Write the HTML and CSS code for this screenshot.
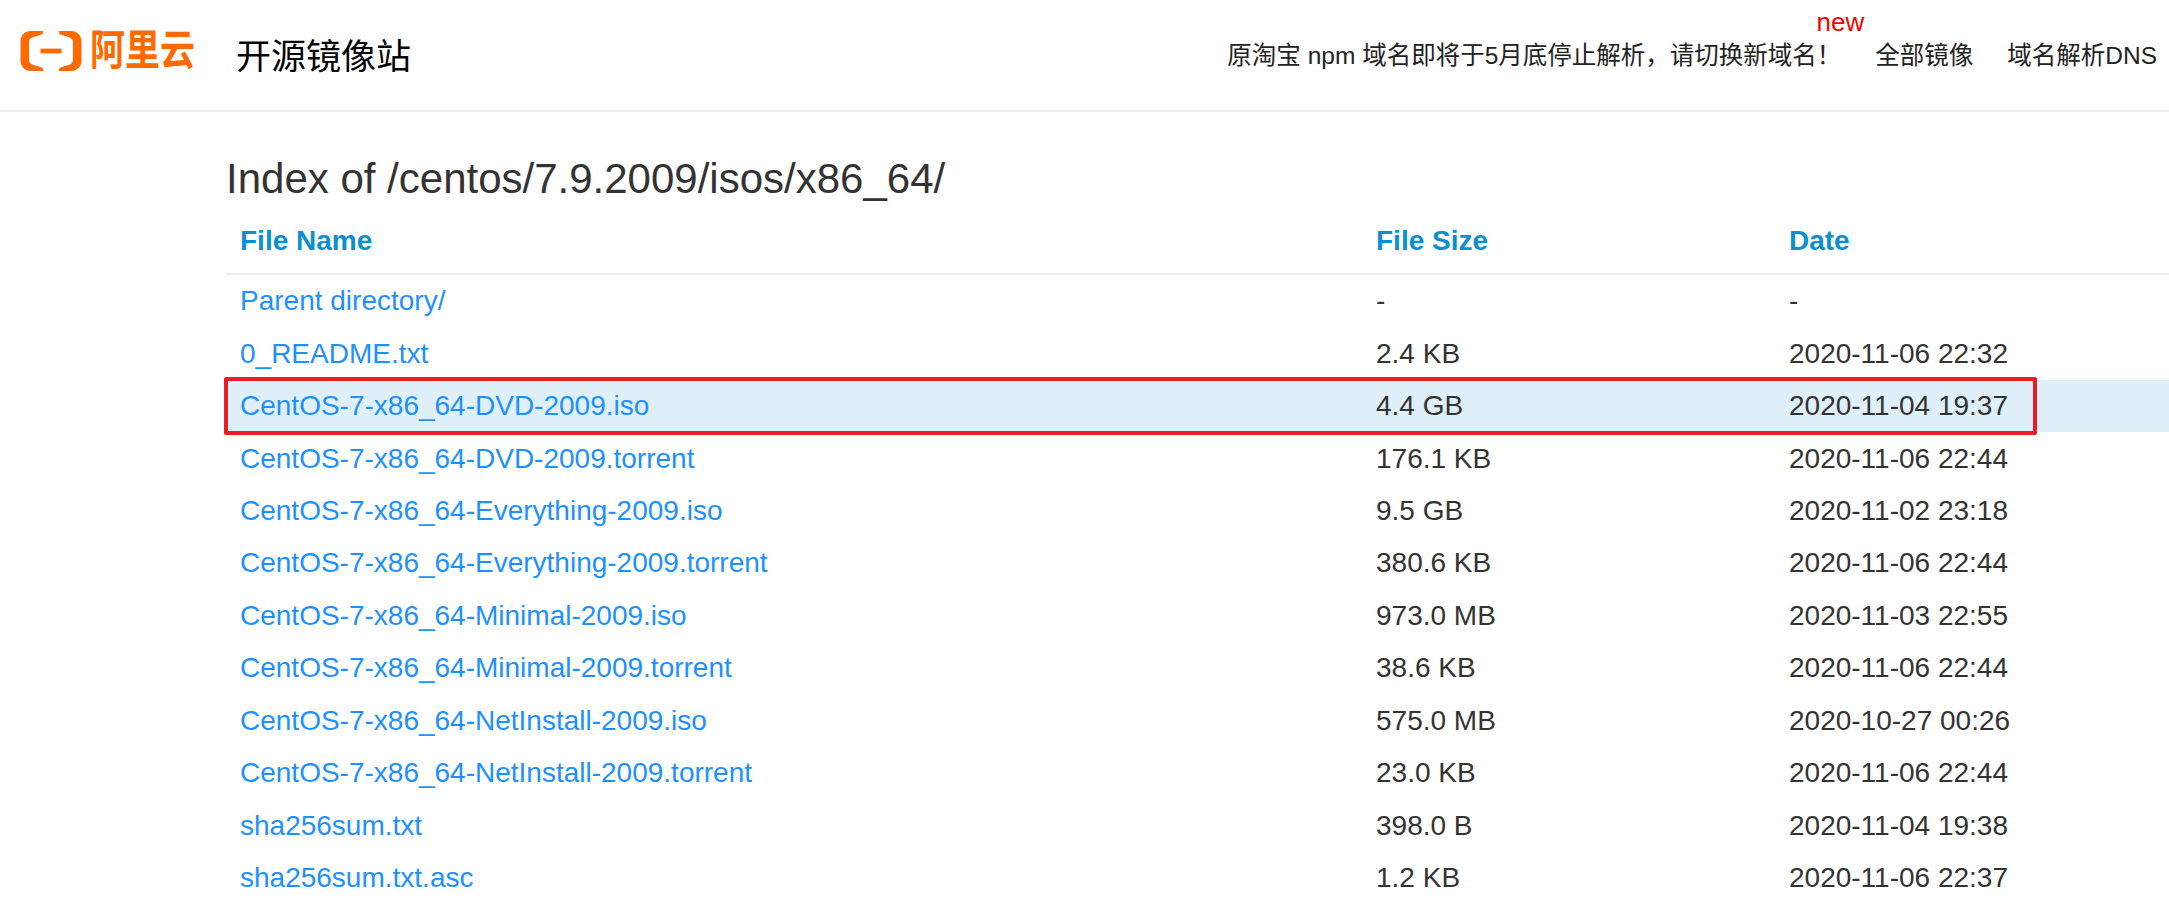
FILE: index.html
```html
<!DOCTYPE html>
<html lang="zh-CN">
<head>
    <meta charset="UTF-8">
    <meta name="viewport" content="width=device-width, initial-scale=1.0">
    <title>Index of /centos/7.9.2009/isos/x86_64/</title>
    <link rel="stylesheet" href="styles.css">
</head>
<body>
    <header class="header">
        <div class="brand">
            <svg class="logo-mark" viewBox="0 0 64 42" width="62" height="40">
                <path fill="#ff6a00" d="M24 0H11C4.500 0 0 4.500 0 11V31C0 37.500 4.500 42 11 42H24L23 38.500L13 35.500C10.500 34.800 9 33 9 30.500V11.500C9 9 10.500 7.200 13 6.500L23 3.500Z"/>
                <path fill="#ff6a00" d="M40 0H53C59.500 0 64 4.500 64 11V31C64 37.500 59.500 42 53 42H40L41 38.500L51 35.500C53.500 34.800 55 33 55 30.500V11.500C55 9 53.500 7.200 51 6.500L41 3.500Z"/>
                <rect fill="#ff6a00" x="21" y="18.500" width="22" height="5"/>
            </svg>
            <span class="logo-text">阿里云</span>
            <span class="site-name">开源镜像站</span>
        </div>
        <nav class="nav">
            <a class="nav-notice" href="#">原淘宝 npm 域名即将于5月底停止解析，请切换新域名！<sup class="new-tag">new</sup></a>
            <a href="#">全部镜像</a>
            <a href="#">域名解析DNS</a>
        </nav>
    </header>

    <main class="content">
        <h3 class="title">Index of /centos/7.9.2009/isos/x86_64/</h3>
        <table class="files">
            <thead>
                <tr>
                    <th class="col-name">File Name</th>
                    <th class="col-size">File Size</th>
                    <th>Date</th>
                </tr>
            </thead>
            <tbody>
                <tr><td><a href="#">Parent directory/</a></td><td>-</td><td>-</td></tr>
                <tr><td><a href="#">0_README.txt</a></td><td>2.4 KB</td><td>2020-11-06 22:32</td></tr>
                <tr class="active"><td><a href="#">CentOS-7-x86_64-DVD-2009.iso</a><div class="red-box"></div></td><td>4.4 GB</td><td>2020-11-04 19:37</td></tr>
                <tr><td><a href="#">CentOS-7-x86_64-DVD-2009.torrent</a></td><td>176.1 KB</td><td>2020-11-06 22:44</td></tr>
                <tr><td><a href="#">CentOS-7-x86_64-Everything-2009.iso</a></td><td>9.5 GB</td><td>2020-11-02 23:18</td></tr>
                <tr><td><a href="#">CentOS-7-x86_64-Everything-2009.torrent</a></td><td>380.6 KB</td><td>2020-11-06 22:44</td></tr>
                <tr><td><a href="#">CentOS-7-x86_64-Minimal-2009.iso</a></td><td>973.0 MB</td><td>2020-11-03 22:55</td></tr>
                <tr><td><a href="#">CentOS-7-x86_64-Minimal-2009.torrent</a></td><td>38.6 KB</td><td>2020-11-06 22:44</td></tr>
                <tr><td><a href="#">CentOS-7-x86_64-NetInstall-2009.iso</a></td><td>575.0 MB</td><td>2020-10-27 00:26</td></tr>
                <tr><td><a href="#">CentOS-7-x86_64-NetInstall-2009.torrent</a></td><td>23.0 KB</td><td>2020-11-06 22:44</td></tr>
                <tr><td><a href="#">sha256sum.txt</a></td><td>398.0 B</td><td>2020-11-04 19:38</td></tr>
                <tr><td><a href="#">sha256sum.txt.asc</a></td><td>1.2 KB</td><td>2020-11-06 22:37</td></tr>
            </tbody>
        </table>
    </main>
</body>
</html>
```

FILE: styles.css
```css
html, body {
    height: 100%;
}
body {
    margin: 0;
    overflow: hidden;
    font-family: "Liberation Sans", "Noto Sans CJK SC", sans-serif;
    font-size: 28px;
    color: #333;
    background: #fff;
}
.header {
    display: flex;
    justify-content: space-between;
    align-items: center;
    height: 110px;
    padding: 0 12px 0 20px;
    border-bottom: 2px solid #eee;
}
.brand {
    display: flex;
    align-items: center;
}
.logo-mark {
    margin-top: -8px;
}
.logo-text {
    margin-left: 8px;
    margin-top: -8px;
    width: 107px;
    font-size: 35px;
    font-weight: bold;
    line-height: 44px;
    white-space: nowrap;
    color: #ff6a00;
    transform: scaleY(1.2);
}
.site-name {
    margin-left: 39px;
    margin-top: -4px;
    font-size: 35px;
    color: #000;
}
.nav {
    display: flex;
    align-items: center;
    gap: 34px;
    margin-top: -3px;
}
.nav a {
    color: #222;
    text-decoration: none;
    font-size: 24.500px;
}
.nav-notice {
    position: relative;
}
.new-tag {
    position: absolute;
    right: -23px;
    top: -28px;
    font-size: 26px;
    line-height: 28px;
    color: #f00;
}
.content {
    padding: 0 0 0 226px;
}
.title {
    margin: 37px 0 0;
    font-size: 42px;
    font-weight: normal;
    line-height: 60px;
}
.files {
    width: 100%;
    border-collapse: collapse;
    table-layout: fixed;
}
.col-name {
    width: 1108px;
}
.col-size {
    width: 385px;
}
.files th {
    padding: 0 14px;
    height: 64px;
    text-align: left;
    font-size: 28px;
    color: #0a8fd1;
    border-bottom: 2px solid #eee;
}
.files td {
    padding: 0 14px;
    height: 52.450px;
    line-height: 36px;
}
.files a {
    color: #1e90ff;
    text-decoration: none;
}
.active td {
    background: #dff0fa;
}
.active td:first-child {
    position: relative;
}
.red-box {
    position: absolute;
    left: -2px;
    top: -3px;
    box-sizing: border-box;
    width: 1813px;
    height: 58px;
    border: 4px solid #ed1c24;
    border-radius: 2px;
}
```
